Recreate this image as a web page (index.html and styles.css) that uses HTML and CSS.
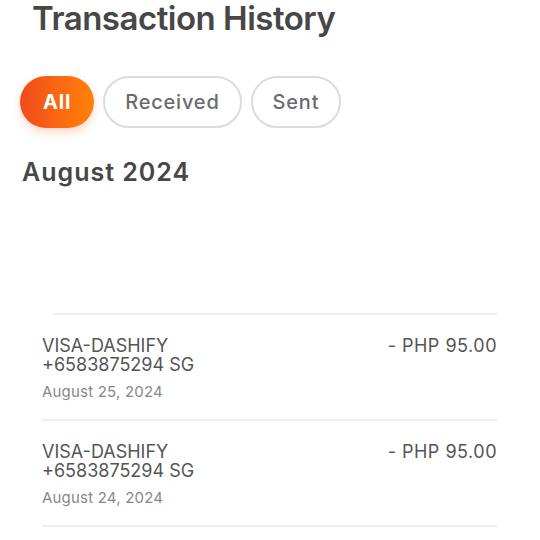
FILE: index.html
```html
<!DOCTYPE html>
<html>
<head>
<meta charset="utf-8">
<link rel="stylesheet" href="styles.css">
</head>
<body>
<div class="page">
  <h1 class="title">Transaction History</h1>
  <div class="filters">
    <span class="pill pill-active">All</span>
    <span class="pill">Received</span>
    <span class="pill">Sent</span>
  </div>
  <h2 class="month">August 2024</h2>
  <div class="placeholder"></div>
  <ul class="list">
    <li class="row">
      <div class="info">
        <div class="name">VISA-DASHIFY<br>+6583875294 SG</div>
        <div class="date">August 25, 2024</div>
      </div>
      <div class="amount">- PHP 95.00</div>
    </li>
    <li class="row">
      <div class="info">
        <div class="name">VISA-DASHIFY<br>+6583875294 SG</div>
        <div class="date">August 24, 2024</div>
      </div>
      <div class="amount">- PHP 95.00</div>
    </li>
  </ul>
</div>
</body>
</html>
```
FILE: styles.css
```css
html, body {
  margin: 0;
  padding: 0;
  background: #ffffff;
}
body {
  font-family: Inter, "Open Sans", "DejaVu Sans", sans-serif;
  color: #4a4a4a;
  overflow: hidden;
}
.page {
  width: 540px;
}
.title {
  margin: 0;
  padding: 3px 0 0 32px;
  font-size: 33px;
  line-height: 31px;
  font-weight: 600;
  letter-spacing: -0.5px;
  color: #474747;
}
.filters {
  display: flex;
  gap: 9px;
  margin-top: 42px;
  padding-left: 20px;
}
.pill {
  box-sizing: border-box;
  height: 52px;
  display: flex;
  align-items: center;
  padding: 0 20px;
  border: 2px solid #dcdcdc;
  border-radius: 26px;
  font-size: 20px;
  font-weight: 500;
  letter-spacing: 0.8px;
  color: #6b6b6b;
}
.pill-active {
  border: none;
  padding: 0 23px;
  background: linear-gradient(90deg, #ef4a1c 0%, #fb6a12 55%, #ff820a 100%);
  color: #ffffff;
  font-weight: 700;
  box-shadow: 0 5px 9px rgba(240, 90, 30, 0.22);
}
.month {
  margin: 29px 0 0;
  padding-left: 22px;
  font-size: 25px;
  line-height: 30px;
  font-weight: 600;
  letter-spacing: 1px;
  color: #474747;
}
.placeholder {
  height: 126px;
  margin: 0 43px 0 53px;
  border-bottom: 2px solid #efefef;
}
.list {
  list-style: none;
  margin: 0;
  padding: 0 43px 0 42px;
}
.row {
  display: flex;
  justify-content: space-between;
  align-items: flex-start;
  padding: 21px 0 18px;
  border-bottom: 2px solid #efefef;
}
.name {
  font-size: 18px;
  line-height: 19px;
  color: #555555;
}
.date {
  margin-top: 9px;
  font-size: 15px;
  line-height: 18px;
  letter-spacing: 0.2px;
  color: #888888;
}
.amount {
  font-size: 18px;
  line-height: 19px;
  letter-spacing: 0.5px;
  color: #555555;
}
```
